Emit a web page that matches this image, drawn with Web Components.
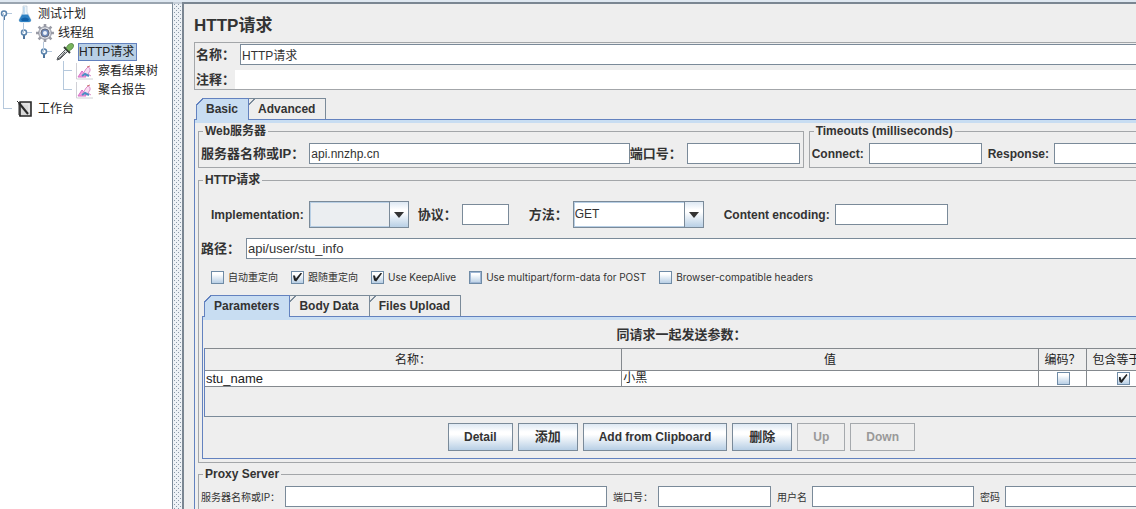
<!DOCTYPE html>
<html lang="zh-CN">
<head>
<meta charset="utf-8">
<title>Apache JMeter</title>
<style>
html, body { margin: 0; height: 100%; }
body {
  font: 12px/16px "Liberation Sans", "Noto Sans CJK SC", sans-serif;
  color: #333; background: #eee; overflow: hidden;
  --line: #7a8a99; --soft: #a3a6a9; --edge: #6382bf; --tint: #c8ddf2;
  --metal: linear-gradient(#dde8f3 0, #fff 30%, #fff 40%, #b8cfe5 100%);
}
</style>
</head>
<body>
<jm-app></jm-app>
<script>
const define = (name, html, setup) => {
  const tpl = document.createElement('template');
  tpl.innerHTML = '<style>*,*::before,*::after{box-sizing:border-box}</style>' + html;
  customElements.define(name, class extends HTMLElement {
    constructor() {
      super();
      this.attachShadow({ mode: 'open' }).append(tpl.content.cloneNode(true));
    }
    connectedCallback() { if (setup) setup(this, this.shadowRoot); }
  });
};

const ICONS = {
  flask: '<path d="M7 1h4v6l4 8q0 2-2 2H5q-2 0-2-2l4-8z" fill="#edf4fa" stroke="#b9c8d6" stroke-width=".7"/><path d="M6 9.500h6l3 5.500q0 2-2 2H5q-2 0-2-2z" fill="#2f82c4"/><path d="M5 14q4-3 8 0l-1 2H6z" fill="#1261a8"/><path d="M8 2v7" stroke="#9cc7e8"/>',
  gear: '<g stroke="#9a9ca6" stroke-width="2.600"><path d="M9 0v18M0 9h18M2.600 2.600l12.800 12.800M15.400 2.600L2.600 15.400"/></g><circle cx="9" cy="9" r="6.300" fill="#dcdee4" stroke="#8d909d" stroke-width="1"/><circle cx="9" cy="9" r="4" fill="#6f8cbc" stroke="#666b7d"/><circle cx="9" cy="9" r="2" fill="#eef3fa"/>',
  dropper: '<path d="M1 17l1-3 8-8 2 2-8 8z" fill="#d8dde0" stroke="#565b5f"/><path d="M2 16l3-2 4-5" stroke="#444" fill="none"/><path d="M8 4l6 6" stroke="#353b35" stroke-width="2"/><path d="M10 5l2-3q3-3 5-1t-1 5l-3 2z" fill="#78b45c" stroke="#507b43" stroke-width=".7"/>',
  chart: '<path d="M.5 1v16H17" fill="none" stroke="#d0d0d6"/><path d="M2 15l4-6 3 3 1 3z" fill="#f0a0e0" stroke="#d86fc6"/><path d="M7 12l3-5 2-2q3 1 2 4l-2 3 3 2" fill="#f9dff3" stroke="#dd8fcb"/><path d="M6 14l3-2 4 2" stroke="#4b8fc4" stroke-width="2" fill="none"/><path d="M11 5l3-1" stroke="#c77"/>',
  notebook: '<path d="M4 2h11v14H4z" fill="#d9d9d9" stroke="#292929" stroke-width="1.600"/><path d="M1 1l2 2v12l2 1" stroke="#292929" fill="none"/><path d="M3 3l9 11" stroke="#292929" stroke-width="2"/><path d="M7 4h6v8" stroke="#eee" fill="none"/>'
};

define('jm-icon', '<style>:host{display:block;width:18px;height:18px}svg{display:block}</style><svg width="18" height="18" viewBox="0 0 18 18" aria-hidden="true"></svg>',
  (el, root) => { root.querySelector('svg').innerHTML = ICONS[el.getAttribute('name')]; });

define('jm-node', `<style>
  :host { display: block; position: relative; }
  :host::before { content: ""; position: absolute; left: 3px; top: 0; bottom: 0; border-left: 1px solid #b5c8dc; }
  :host([first])::before { top: 9px; }
  :host([last])::before { bottom: auto; height: 10px; }
  .row { display: flex; align-items: center; height: 19px; }
  svg { flex: none; width: 16px; height: 19px; }
  jm-icon { flex: none; margin-right: 4px; }
  .label { padding: 0 2px 0 0; line-height: 18px; white-space: nowrap; color: #222; }
  :host([selected]) .label { background: #b8cfe5; box-shadow: inset 0 0 0 1px #6382bf; padding: 0 3px 0 1px; }
  .knob { display: none; }
  :host([open]) > .row .knob { display: block; }
  .kids { padding-left: 20px; }
  </style>
  <div class="row"><svg viewBox="0 0 16 19" aria-hidden="true"><path d="M4 9.500h8" stroke="#b5c8dc"/><g class="knob"><path d="M4 12v4" stroke="#4d739b" stroke-width="2"/><circle cx="4" cy="9.500" r="2.500" fill="#fff" stroke="#5b84ad" stroke-width="1.500"/></g></svg><jm-icon></jm-icon><span class="label"></span></div>
  <div class="kids" role="group"><slot></slot></div>`,
  (el, root) => {
    el.setAttribute('role', 'treeitem');
    const icon = root.querySelector('jm-icon');
    icon.replaceWith(Object.assign(document.createElement('template'), { innerHTML: `<jm-icon name="${el.getAttribute('icon')}"></jm-icon>` }).content);
    root.querySelector('.label').textContent = el.getAttribute('label');
  });

define('jm-field', `<style>
  :host { display: flex; align-items: center; gap: 5px; font-weight: bold; }
  :host([grow]) { flex: 1; min-width: 0; }
  :host([cjk]) { font-size: 13px; }
  :host([small]) { font: 10px/16px Inter, "Noto Sans CJK SC", sans-serif; }
  label { white-space: nowrap; }
  input { flex: none; width: var(--w, 113px); height: 21px; margin: 0; padding: 0 1px; border: 1px solid var(--line); border-radius: 0;
    background: #fff; color: #333; font: 12px/16px "Liberation Sans", "Noto Sans CJK SC", sans-serif; outline: 0; }
  :host([grow]) input { flex: 1; min-width: 0; }
  :host([large]) { gap: 6px; }
  :host([large]) input { font-size: 13px; }
  :host([plain]) { gap: 0; }
  :host([plain]) input { border: 0; height: 19px; }
  </style><label for="f"></label><input id="f" type="text">`,
  (el, root) => {
    root.querySelector('label').textContent = el.getAttribute('label');
    const input = root.querySelector('input');
    input.value = el.getAttribute('value') || '';
    if (el.hasAttribute('width')) input.style.setProperty('--w', el.getAttribute('width') + 'px');
  });

define('jm-select', `<style>
  :host { display: flex; align-items: center; gap: 5px; font-weight: bold; }
  :host([cjk]) { font-size: 13px; }
  label { white-space: nowrap; }
  .box { position: relative; width: var(--w); height: 27px; }
  select { appearance: none; width: 100%; height: 100%; margin: 0; padding: 0 22px 2px 1px; border: 1px solid var(--line); border-radius: 0;
    box-shadow: inset 0 0 0 1px #b8cfe5; background: #fff; color: #333; font: 12px/16px "Liberation Sans", "Noto Sans CJK SC", sans-serif; }
  :host([blank]) select { background: #ebeef1; }
  .arrow { position: absolute; inset: 1px 1px 1px auto; width: 19px; border-left: 1px solid var(--line); background: var(--metal);
    display: grid; place-items: center; pointer-events: none; }
  </style><label for="s"></label><div class="box"><select id="s"><option></option></select>
  <span class="arrow"><svg width="10" height="6" aria-hidden="true"><path d="M0 0h10L5 6z" fill="#333"/></svg></span></div>`,
  (el, root) => {
    root.querySelector('label').textContent = el.getAttribute('label');
    root.querySelector('option').textContent = el.getAttribute('value') || '';
    root.querySelector('.box').style.setProperty('--w', el.getAttribute('width') + 'px');
  });

define('jm-check', `<style>
  :host { display: flex; align-items: center; gap: 4px; font: 10px/14px Inter, "Noto Sans CJK SC", sans-serif; }
  :host([bare]) { display: grid; place-items: center; }
  input { appearance: none; flex: none; width: 13px; height: 13px; margin: 0; border: 1px solid #6f8ba6; background: linear-gradient(#fff 20%, #b8cfe5); }
  :host([focused]) input { box-shadow: inset 0 0 0 1px #9fb6d4; }
  input:checked::after { content: ""; display: block; width: 9px; height: 9px; margin: 1px; background: #222;
    clip-path: polygon(0 34%, 22% 34%, 32% 66%, 88% 0, 100% 12%, 36% 100%, 12% 90%); }
  label { white-space: nowrap; }
  label:empty { display: none; }
  </style><input id="c" type="checkbox"><label for="c"></label>`,
  (el, root) => {
    const input = root.querySelector('input');
    input.checked = el.hasAttribute('checked');
    if (el.hasAttribute('bare')) input.setAttribute('aria-label', el.getAttribute('label'));
    else root.querySelector('label').textContent = el.getAttribute('label');
  });

define('jm-button', `<style>
  :host { display: block; }
  button { height: 28px; margin: 0; padding: 0 15px; border: 1px solid var(--line); border-radius: 0; background: var(--metal); color: #333;
    font: bold 12px/16px "Liberation Sans", "Noto Sans CJK SC", sans-serif; white-space: nowrap; }
  :host([cjk]) button { padding: 0 16px; font-size: 13px; }
  button:disabled { background: #eee; color: #999; border-color: #a5a9ad; }
  </style><button type="button"><slot></slot></button>`,
  (el, root) => { root.querySelector('button').disabled = el.hasAttribute('disabled'); });

define('jm-group', `<style>
  :host { display: block; min-width: 0; }
  fieldset { min-width: 0; margin: 0; padding: 4px 3px 3px 2px; border: 1px solid var(--soft); }
  legend { margin-left: 2px; padding: 0 2px; font-weight: bold; line-height: 16px; }
  </style><fieldset><legend></legend><slot></slot></fieldset>`,
  (el, root) => { root.querySelector('legend').textContent = el.getAttribute('label'); });

define('jm-tabs', `<style>
  :host { display: block; min-width: 0; }
  .bar { display: flex; padding-left: 2px; }
  button { position: relative; height: 21px; margin: 0 -1px 0 0; padding: 0 10px 1px 9px; border: 1px solid var(--line); border-bottom: 0; border-radius: 0;
    background: #eee; color: #333; font: bold 12px/16px "Liberation Sans", sans-serif; white-space: nowrap; }
  button[aria-selected=true] { border-color: var(--edge); background: var(--tint); height: 22px; margin-bottom: -1px; z-index: 1; }
  button::before { content: ""; position: absolute; left: -1px; top: -1px; width: 8px; height: 8px;
    background: linear-gradient(135deg, #eee 42%, var(--edge) 43% 52%, transparent 53%); }
  button + button::before { background: linear-gradient(135deg, transparent 42%, var(--line) 43% 52%, transparent 53%); }
  .panel { border: 1px solid var(--edge); }
  .panel::before { content: ""; display: block; height: 3px; background: var(--tint); }
  </style><div class="bar" role="tablist"></div><div class="panel" role="tabpanel"><slot></slot></div>`,
  (el, root) => {
    root.querySelector('.bar').innerHTML = el.getAttribute('tabs').split('|')
      .map((t, i) => `<button type="button" role="tab" aria-selected="${i === 0}">${t}</button>`).join('');
  });

define('jm-params', `<style>
  :host { display: block; padding: 0 7px 7px 1px; }
  h2 { height: 28px; margin: 0; padding-top: 7px; font-size: 13px; line-height: 16px; text-align: center; }
  .wrap { padding-bottom: 29px; border-bottom: 1px solid var(--line); border-left: 1px solid var(--edge); }
  table { width: 100%; border-collapse: collapse; table-layout: fixed; color: #222; }
  th, td { padding: 0; border: 1px solid #84898e; border-left: 0; white-space: nowrap; overflow: hidden; }
  th { height: 22px; font-weight: normal; }
  td { height: 16px; padding-left: 1px; background: #fff; line-height: 15px; }
  td:first-child { font-size: 13px; }
  .flag { width: 48px; } .equal { width: 72px; }
  .buttons { display: flex; justify-content: center; gap: 5px; padding-top: 6px; }
  </style>
  <h2 id="t">同请求一起发送参数：</h2>
  <div class="wrap"><table aria-labelledby="t">
  <thead><tr><th>名称：</th><th>值</th><th class="flag">编码？</th><th class="equal">包含等于？</th></tr></thead>
  <tbody><tr><td>stu_name</td><td>小黑</td><td><jm-check bare label="编码"></jm-check></td><td><jm-check bare checked label="包含等于"></jm-check></td></tr></tbody></table></div>
  <div class="buttons"><jm-button>Detail</jm-button><jm-button cjk>添加</jm-button><jm-button>Add from Clipboard</jm-button><jm-button cjk>删除</jm-button><jm-button disabled>Up</jm-button><jm-button disabled>Down</jm-button></div>`);

define('jm-request', `<style>
  :host { display: block; width: calc(100% + 39px); padding-left: 10px; }
  h1 { margin: 0; padding: 12px 0 6px; font-size: 17px; line-height: 20px; }
  .names { border: 1px solid var(--soft); padding: 1px 0 0 1px; display: grid; gap: 5px; margin-bottom: 8px; }
  .body { padding: 0 3px; }
  .row { display: flex; align-items: center; }
  .top { gap: 5px; margin-bottom: 4px; }
  .top .web { flex: 1; }
  .top .fields { gap: 6px; }
  .top jm-group .row { height: 21px; }
  .main { padding: 9px 0 10px 10px; }
  .checks { padding: 11px 0 11px 10px; gap: 13px; }
  .main > * + * { margin-left: 20px; }
  .main > .near { margin-left: 9px; }
  jm-tabs jm-tabs { margin-left: 1px; }
  .proxy { margin-top: 3px; }
  .proxy .row { gap: 6px; }
  </style>
  <h1>HTTP请求</h1>
  <div class="names"><jm-field cjk grow label="名称：" value="HTTP请求"></jm-field><jm-field cjk grow plain label="注释："></jm-field></div>
  <jm-tabs tabs="Basic|Advanced"><div class="body">
    <div class="row top">
      <jm-group class="web" label="Web服务器"><div class="row"><jm-field cjk grow label="服务器名称或IP：" value="api.nnzhp.cn"></jm-field><jm-field cjk label="端口号："></jm-field></div></jm-group>
      <jm-group label="Timeouts (milliseconds)"><div class="row fields"><jm-field label="Connect:"></jm-field><jm-field label="Response:"></jm-field></div></jm-group>
    </div>
    <jm-group label="HTTP请求">
      <div class="row main"><jm-select blank label="Implementation:" width="100"></jm-select><jm-field class="near" cjk label="协议：" width="47"></jm-field><jm-select cjk label="方法：" value="GET" width="131"></jm-select><jm-field label="Content encoding:"></jm-field></div>
      <jm-field cjk grow large label="路径：" value="api/user/stu_info"></jm-field>
      <div class="row checks"><jm-check label="自动重定向"></jm-check><jm-check checked label="跟随重定向"></jm-check><jm-check checked label="Use KeepAlive"></jm-check><jm-check focused label="Use multipart/form-data for POST"></jm-check><jm-check label="Browser-compatible headers"></jm-check></div>
      <jm-tabs tabs="Parameters|Body Data|Files Upload"><jm-params></jm-params></jm-tabs>
    </jm-group>
    <jm-group class="proxy" label="Proxy Server"><div class="row"><jm-field small grow label="服务器名称或IP："></jm-field><jm-field small label="端口号："></jm-field><jm-field small label="用户名" width="162"></jm-field><jm-field small label="密码" width="162"></jm-field></div></jm-group>
  </div></jm-tabs>`);

define('jm-app', `<style>
  :host { display: grid; grid-template-columns: 173px 9px minmax(0, 1fr); height: 100vh; overflow: hidden; padding-top: 2px; background: #dfe8f1; }
  nav { background: #fff; border-top: 2px solid #9aa5b0; border-right: 1px solid var(--line); overflow: hidden; }
  .split { border-top: 2px solid #c5ced8; background: #eef2f6; overflow: hidden; min-height: 0; }
  .split svg { display: block; width: 100%; height: 100%; }
  main { border: solid #7a8692; border-width: 2px 0 0 2px; background: #eee; overflow: hidden; min-width: 0; }
  </style>
  <nav role="tree" aria-label="测试计划">
    <jm-node first open icon="flask" label="测试计划">
      <jm-node open last icon="gear" label="线程组">
        <jm-node open last selected icon="dropper" label="HTTP请求">
          <jm-node icon="chart" label="察看结果树"></jm-node>
          <jm-node last icon="chart" label="聚合报告"></jm-node>
        </jm-node>
      </jm-node>
    </jm-node>
    <jm-node last icon="notebook" label="工作台"></jm-node>
  </nav>
  <div class="split" role="separator"><svg aria-hidden="true"><defs><pattern id="dots" width="4" height="4" patternUnits="userSpaceOnUse"><path d="M1 0h1v1H1zM3 2h1v1H3z" fill="#8b99a8"/></pattern></defs><rect width="100%" height="100%" fill="url(#dots)"/></svg></div>
  <main><jm-request></jm-request></main>`);
</script>
</body>
</html>
